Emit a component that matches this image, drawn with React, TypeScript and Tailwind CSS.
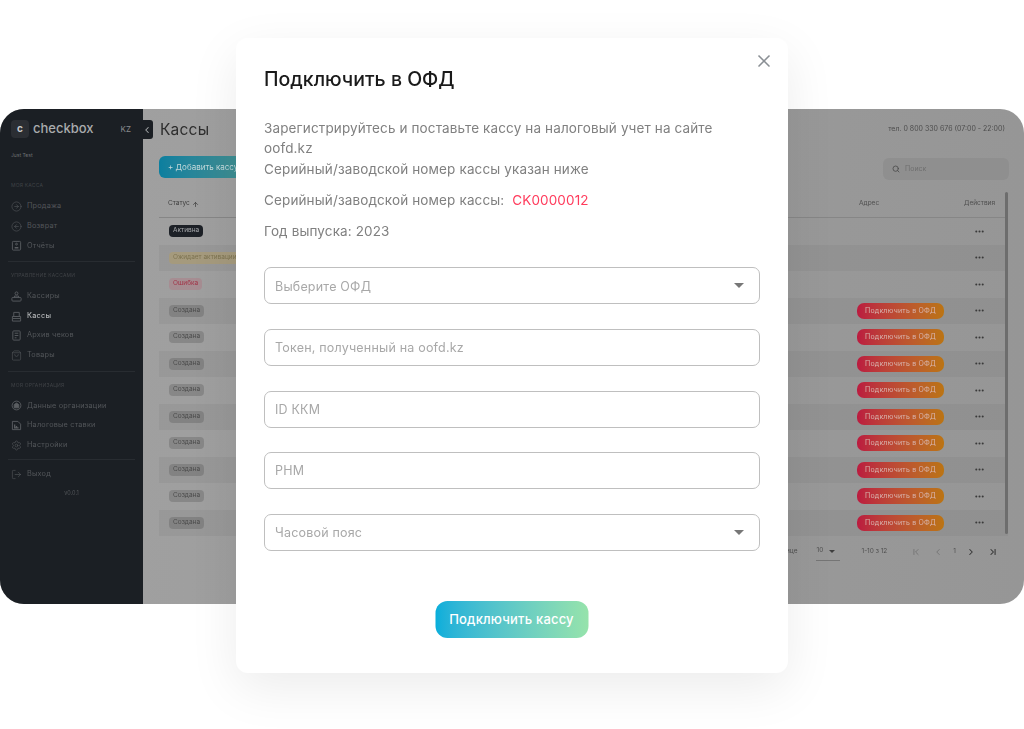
import React from "react";
import { ShoppingBag, Search, X, ArrowUp, ChevronLeft, ChevronRight, MoreHorizontal, CircleArrowRight, CircleArrowLeft, ChevronFirst, ChevronLast, Settings, LogOut } from "lucide-react";

const font = "font-['Inter','Noto_Sans',sans-serif]";

function svg(children: React.ReactNode) {
  return function Icon() {
    return (
      <svg width="11" height="11" viewBox="0 0 12 12" fill="none" stroke="currentColor" strokeWidth="1" className="shrink-0 text-[#5a5d61]">
        {children}
      </svg>
    );
  };
}

const IconReport = svg(<><rect x="1.5" y="1.5" width="9" height="9.5" rx="1" /><circle cx="6" cy="4.5" r="1" /><path d="M4 8.5h4" strokeWidth="1.5" /></>);
const IconCashier = svg(<><circle cx="6" cy="2.6" r="1.6" /><path d="M3.8 7V5.5h4.4V7" /><rect x="1" y="7" width="10" height="4" rx="1" /></>);
const IconRegister = svg(<><path d="M3 6V1.5h6V6" /><path d="M1.5 6h9v2.2h-9zM1.5 8.2V11h9V8.2" /></>);
const IconArchive = svg(<><rect x="2" y="1" width="8" height="10" rx="1" /><path d="M4 3.5h4M4 6h4M4 8.5h2" /></>);
const IconOrg = svg(<><circle cx="6" cy="6" r="4.8" /><path d="M3.5 8.5V5l2.5-1.6L8.5 5v3.5z" fill="currentColor" /></>);
const IconTax = svg(<><path d="M1.5 1.5h6l3 3v6h-9z" /><path d="M4 5v3.5h4.2M6 6.5v2" strokeWidth="1.4" /></>);

function NavItem({ icon: Icon, label, active }: { icon: any; label: string; active?: boolean }) {
  return (
    <div className={`flex h-[19.8px] items-center gap-[5px] pl-[11px] text-[7.3px] tracking-[0.2px] ${active ? "font-medium text-[#b0b2b4]" : "text-[#53565a]"}`}>
      <Icon size={11} strokeWidth={1.2} className="shrink-0 text-[#5a5d61]" />
      <span>{label}</span>
    </div>
  );
}

function SectionTitle({ children }: { children: React.ReactNode }) {
  return <div className="pl-[11px] text-[5px] uppercase tracking-[0.2px] text-[#3f4246]">{children}</div>;
}

function Divider() {
  return <div className="mx-[8px] h-px bg-[#282c31]" />;
}

const rows = [
  { s: "Активна", c: "bg-[#1d2127] text-[#a7a9ac]", o: false },
  { s: "Ожидает активации", c: "bg-[#a59a7d] text-[#7d7350]", o: false },
  { s: "Ошибка", c: "bg-[#a68d92] text-[#a23347]", o: false },
  ...Array.from({ length: 9 }, () => ({ s: "Создана", c: "bg-black/15 text-[#4a4a4a]", o: true })),
];

function Field({ label, select }: { label: string; select?: boolean }) {
  return (
    <div className="flex h-[37px] items-center justify-between rounded-[7px] border-[1.5px] border-[#bfbfbf] pl-[10px] pr-[15px] text-[12.5px] tracking-[0.2px] text-[#a8a8a8]">
      <span className="pt-[2px]">{label}</span>
      {select && <span className="h-0 w-0 border-x-[5px] border-t-[5px] border-x-transparent border-t-[#777]" />}
    </div>
  );
}

export default function App() {
  return (
    <div className={`relative h-[729px] w-[1024px] overflow-hidden bg-white ${font}`}>
      <div className="pt-[109px]">
        <div className="flex h-[495px] overflow-hidden rounded-[24px] bg-gradient-to-r from-[#a1a1a1] to-[#969696] blur-[0.5px]">
          <aside className="flex w-[143px] shrink-0 flex-col bg-[#1b1f24] pt-[10px]">
            <div className="flex items-center pl-[11px] pr-[12px]">
              <div className="flex h-[18px] w-[18px] items-center justify-center rounded-[4px] bg-[#2b2e33] text-[10px] font-bold text-[#c4c5c7]">c</div>
              <span className="ml-[4px] text-[13px] font-medium text-[#a9abad]">checkbox</span>
              <span className="ml-auto text-[8px] text-[#8a8c8f]">KZ</span>
            </div>
            <div className="mt-[13px] pl-[11px] text-[5px] text-[#6d7073]">Just Test</div>
            <div className="mt-[23px]"><SectionTitle>Моя касса</SectionTitle></div>
            <div className="mt-[7px]">
              <NavItem icon={CircleArrowRight} label="Продажа" />
              <NavItem icon={CircleArrowLeft} label="Возврат" />
              <NavItem icon={IconReport} label="Отчёты" />
            </div>
            <div className="mt-[5px]"><Divider /></div>
            <div className="mt-[10px]"><SectionTitle>Управление кассами</SectionTitle></div>
            <div className="mt-[7px]">
              <NavItem icon={IconCashier} label="Кассиры" />
              <NavItem icon={IconRegister} label="Кассы" active />
              <NavItem icon={IconArchive} label="Архив чеков" />
              <NavItem icon={ShoppingBag} label="Товары" />
            </div>
            <div className="mt-[5px]"><Divider /></div>
            <div className="mt-[10px]"><SectionTitle>Моя организация</SectionTitle></div>
            <div className="mt-[7px]">
              <NavItem icon={IconOrg} label="Данные организации" />
              <NavItem icon={IconTax} label="Налоговые ставки" />
              <NavItem icon={Settings} label="Настройки" />
            </div>
            <div className="mt-[4px]"><Divider /></div>
            <div className="mt-[4px]"><NavItem icon={LogOut} label="Выход" /></div>
            <div className="mt-[5px] text-center text-[5.5px] text-[#53565a]">v0.0.1</div>
          </aside>
          <main className="relative min-w-0 flex-1 pl-[16px] pr-[16px]">
            <div className="absolute left-[-3px] top-[11px] flex h-[19px] w-[13px] items-center justify-center rounded-r-[3px] bg-[#1b1f24] text-[#a9abad]">
              <ChevronLeft size={10} strokeWidth={2.5} />
            </div>
            <div className="flex h-[41px] items-center justify-between">
              <span className="pl-[1px] pt-[1px] text-[15.5px] tracking-[0.2px] text-[#2e2e2e]">Кассы</span>
              <span className="pr-[3px] text-[7px] text-[#4d4d4d]">тел. 0 800 330 676 (07:00 - 22:00)</span>
            </div>
            <div className="mt-[6px] flex items-start justify-between">
              <div className="flex h-[22px] w-[150px] items-center rounded-[6px] bg-gradient-to-r from-[#0b7f9f] to-[#5c9a83] pl-[9px] text-[8px] text-[#c2d8da]">+ Добавить кассу</div>
              <div className="mr-[-1px] mt-[2px] flex h-[22px] w-[126px] items-center gap-[5px] rounded-[6px] bg-[#8f8f8f] pl-[9px] text-[7px] text-[#6e6e6e]">
                <Search size={8} strokeWidth={2.5} className="text-[#4c4c4c]" />
                <span>Поиск</span>
              </div>
            </div>
            <div className="relative mt-[2px]">
              <div className="flex h-[36px] items-end justify-between border-b border-[#868686] pb-[8px] pl-[9px] pr-[13px] text-[6.5px] text-[#4f4f4f]">
                <span className="flex items-center gap-[2px] text-[#3e3e3e]">Статус <ArrowUp size={7} strokeWidth={2.5} /></span>
                <span className="flex"><span className="w-[105px]">Адрес</span><span>Действия</span></span>
              </div>
              {rows.map((r, i) => (
                <div key={i} className={`flex h-[26.5px] items-center justify-between pl-[10px] pr-[23px] ${i % 2 === 1 ? "bg-black/[0.04]" : ""}`}>
                  <span className={`flex h-[12px] items-center rounded-[4px] px-[4px] text-[6.5px] ${r.c}`}>{r.s}</span>
                  <span className="flex items-center gap-[30px]">
                    {r.o && <span className="flex h-[16px] w-[87px] items-center justify-center rounded-[7px] bg-gradient-to-r from-[#bb1a3f] to-[#bb7412] text-[7px] tracking-[0.2px] text-[#d8b6b0]">Подключить в ОФД</span>}
                    <MoreHorizontal size={11} strokeWidth={2.5} className="text-[#3a3a3a]" />
                  </span>
                </div>
              ))}
              <div className="absolute right-0 top-[10px] h-[342px] w-[3.5px] rounded-[2px] bg-[#6d6d6d]" />
            </div>
            <div className="mt-[6px] flex items-center justify-end pr-[10px] text-[6.5px] text-[#4f4f4f]">
              <span>На странице</span>
              <span className="ml-[19px] flex h-[19px] w-[24px] items-center gap-[6px] border-b border-[#757575]">10 <span className="h-0 w-0 border-x-[3px] border-t-[3px] border-x-transparent border-t-[#3e3e3e]" /></span>
              <span className="ml-[21px]">1-10 з 12</span>
              <ChevronFirst size={10} className="ml-[24px] text-[#707070]" />
              <ChevronLeft size={10} className="ml-[12px] text-[#707070]" />
              <span className="ml-[10px]">1</span>
              <ChevronRight size={10} strokeWidth={2.5} className="ml-[10px] text-[#333]" />
              <ChevronLast size={10} strokeWidth={2.5} className="ml-[12px] text-[#333]" />
            </div>
          </main>
        </div>
      </div>

      <div className="absolute left-[236px] top-[38px] h-[635px] w-[552px] rounded-[12px] bg-white px-[28px] shadow-[0_15px_50px_rgba(0,0,0,0.08)]">
        <X size={20} strokeWidth={2} className="absolute right-[14.5px] top-[13px] text-[#8a8f94]" />
        <h2 className="mt-[28px] text-[19.5px] font-medium leading-[26px] text-[#1a1a1a]">Подключить в ОФД</h2>
        <div className="mt-[26px] text-[13.5px] leading-[20.3px] tracking-[0.13px] text-[#808080]">
          <p>Зарегистрируйтесь и поставьте кассу на налоговый учет на сайте<br />oofd.kz<br />Серийный/заводской номер кассы указан ниже</p>
          <p className="mt-[11px]">Серийный/заводской номер кассы:&nbsp; <span className="text-[#ff3b5c]">CK0000012</span></p>
          <p className="mt-[11px]">Год выпуска: 2023</p>
        </div>
        <div className="mt-[26px] flex flex-col gap-[24.6px]">
          <Field label="Выберите ОФД" select />
          <Field label="Токен, полученный на oofd.kz" />
          <Field label="ID ККМ" />
          <Field label="РНМ" />
          <Field label="Часовой пояс" select />
        </div>
        <div className="mt-[50px] flex justify-center">
          <button className="flex h-[37px] w-[153px] -translate-x-[0.5px] items-center justify-center rounded-[12px] bg-gradient-to-r from-[#06aedb] to-[#96e3ab] text-[13px] font-medium tracking-[0.2px] text-white">Подключить кассу</button>
        </div>
      </div>
    </div>
  );
}
